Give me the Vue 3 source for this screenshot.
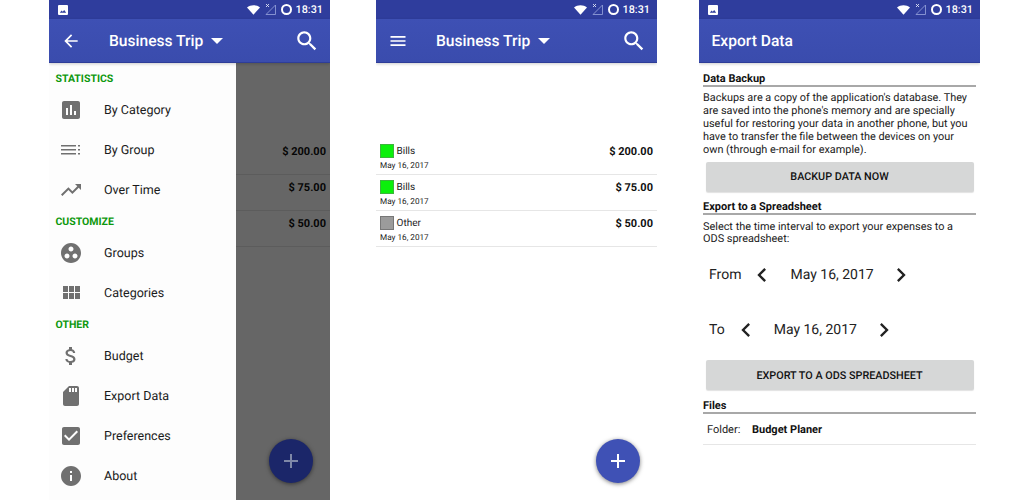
<template>
  <div class="page">
    <!-- drawer open -->
    <div class="phone first">
      <div class="statusbar">
        <svg class="pic" viewBox="0 0 10 10"><path :d="icons.pic" /></svg>
        <svg class="wifi" viewBox="0 0 14 10"><path d="M7 10 0 2.2C2 .8 4.4 0 7 0s5 .8 7 2.2z" /></svg>
        <svg class="signal" viewBox="0 0 11 11"><path d="M10.5 1v9.5H1z" fill="none" stroke="#8f9bd6" stroke-width=".9" /><path d="M1 0l3 3M4 0 1 3" stroke="#dfe3f5" stroke-width=".9" /></svg>
        <span class="ring"></span>
        <span class="time">18:31</span>
      </div>
      <div class="toolbar">
        <svg class="nav" viewBox="0 0 24 24"><path :d="icons.back" /></svg>
        <span class="title">Business Trip</span>
        <span class="caret"></span>
        <svg class="search" viewBox="0 0 24 24"><path :d="icons.search" /></svg>
      </div>
      <!-- the drawer hides the left half of these rows -->
      <div class="expenses">
        <div v-for="row in expenses" :key="row.amount" class="expense right-only">
          <div class="amount">{{ row.amount }}</div>
        </div>
      </div>
      <div class="scrim"></div>
      <div class="drawer">
        <template v-for="item in drawer" :key="item.label">
          <div v-if="item.heading" class="drawer-heading">{{ item.label }}</div>
          <div v-else class="drawer-item">
            <svg class="drawer-icon" viewBox="0 0 24 24"><path :d="item.path" /></svg>
            <span>{{ item.label }}</span>
          </div>
        </template>
      </div>
      <div class="fab dim">
        <svg viewBox="0 0 24 24"><path :d="icons.add" /></svg>
      </div>
    </div>

    <!-- expense list -->
    <div class="phone second">
      <div class="statusbar">
        <svg class="wifi" viewBox="0 0 14 10"><path d="M7 10 0 2.2C2 .8 4.4 0 7 0s5 .8 7 2.2z" /></svg>
        <svg class="signal" viewBox="0 0 11 11"><path d="M10.5 1v9.5H1z" fill="none" stroke="#8f9bd6" stroke-width=".9" /><path d="M1 0l3 3M4 0 1 3" stroke="#dfe3f5" stroke-width=".9" /></svg>
        <span class="ring"></span>
        <span class="time">18:31</span>
      </div>
      <div class="toolbar">
        <svg class="nav" viewBox="0 0 24 24"><path :d="icons.menu" /></svg>
        <span class="title">Business Trip</span>
        <span class="caret"></span>
        <svg class="search" viewBox="0 0 24 24"><path :d="icons.search" /></svg>
      </div>
      <div class="expenses">
        <div v-for="row in expenses" :key="row.amount" class="expense">
          <div>
            <div class="expense-top">
              <span class="swatch" :style="{ background: row.color, borderColor: row.edge }"></span>
              <span class="expense-name">{{ row.name }}</span>
            </div>
            <div class="expense-date">May 16, 2017</div>
          </div>
          <div class="amount">{{ row.amount }}</div>
        </div>
      </div>
      <div class="fab">
        <svg viewBox="0 0 24 24"><path :d="icons.add" /></svg>
      </div>
    </div>

    <!-- export screen -->
    <div class="phone third">
      <div class="statusbar">
        <svg class="pic" viewBox="0 0 10 10"><path :d="icons.pic" /></svg>
        <svg class="wifi" viewBox="0 0 14 10"><path d="M7 10 0 2.2C2 .8 4.4 0 7 0s5 .8 7 2.2z" /></svg>
        <svg class="signal" viewBox="0 0 11 11"><path d="M10.5 1v9.5H1z" fill="none" stroke="#8f9bd6" stroke-width=".9" /><path d="M1 0l3 3M4 0 1 3" stroke="#dfe3f5" stroke-width=".9" /></svg>
        <span class="ring"></span>
        <span class="time">18:31</span>
      </div>
      <div class="toolbar plain">
        <span class="title">Export Data</span>
      </div>
      <div class="export">
        <div class="section-title">Data Backup</div>
        <p>Backups are a copy of the application's database. They are saved into the phone's memory and are specially useful for restoring your data in another phone, but you have to transfer the file between the devices on your own (through e-mail for example).</p>
        <div class="btn">BACKUP DATA NOW</div>
        <div class="section-title second-title">Export to a Spreadsheet</div>
        <p>Select the time interval to export your expenses to a ODS spreadsheet:</p>
        <div v-for="range in ranges" :key="range" class="date-row">
          <span>{{ range }}</span>
          <svg class="chev" viewBox="0 0 24 24"><path :d="icons.left" /></svg>
          <span class="date">May 16, 2017</span>
          <svg class="chev" viewBox="0 0 24 24"><path :d="icons.right" /></svg>
        </div>
        <div class="btn export-btn">EXPORT TO A ODS SPREADSHEET</div>
        <div class="section-title files-title">Files</div>
        <div class="folder">
          <span class="folder-label">Folder:</span>
          <b>Budget Planer</b>
        </div>
      </div>
    </div>
  </div>
</template>

<script setup>
const icons = {
  pic: 'M1 0h8a1 1 0 0 1 1 1v8a1 1 0 0 1-1 1H1a1 1 0 0 1-1-1V1a1 1 0 0 1 1-1zm.8 7.8h6.4L6.2 5 4.7 6.8 3.6 5.6z',
  back: 'M20 11H7.83l5.59-5.59L12 4l-8 8 8 8 1.41-1.41L7.83 13H20v-2z',
  menu: 'M3 18h18v-2H3v2zm0-5h18v-2H3v2zm0-7v2h18V6H3z',
  search: 'M15.5 14h-.79l-.28-.27C15.41 12.59 16 11.11 16 9.5 16 5.91 13.09 3 9.5 3S3 5.91 3 9.5 5.91 16 9.5 16c1.61 0 3.09-.59 4.23-1.57l.27.28v.79l5 4.99L20.49 19l-4.99-5zm-6 0C7.01 14 5 11.99 5 9.5S7.01 5 9.5 5 14 7.01 14 9.5 11.99 14 9.5 14z',
  add: 'M19 13h-6v6h-2v-6H5v-2h6V5h2v6h6v2z',
  left: 'M15.41 7.41L14 6l-6 6 6 6 1.41-1.41L10.83 12z',
  right: 'M8.59 16.59L10 18l6-6-6-6-1.41 1.41L13.17 12z',
}

const expenses = [
  { name: 'Bills', amount: '$ 200.00', color: '#0bf00b', edge: '#3cb53c' },
  { name: 'Bills', amount: '$ 75.00', color: '#0bf00b', edge: '#3cb53c' },
  { name: 'Other', amount: '$ 50.00', color: '#9b9b9b', edge: '#777' },
]

const ranges = ['From', 'To']

const drawer = [
  { label: 'STATISTICS', heading: true },
  { label: 'By Category', path: 'M19 3H5c-1.1 0-2 .9-2 2v14c0 1.1.9 2 2 2h14c1.1 0 2-.9 2-2V5c0-1.1-.9-2-2-2zM9 17H7v-7h2v7zm4 0h-2V7h2v10zm4 0h-2v-4h2v4z' },
  { label: 'By Group', path: 'M2 7h15v1.6H2zm0 4h15v1.6H2zm0 4h15v1.6H2zm17-8h2v1.6h-2zm0 4h2v1.6h-2zm0 4h2v1.6h-2z' },
  { label: 'Over Time', path: 'M16 6l2.29 2.29-4.88 4.88-4-4L2 16.59 3.41 18l6-6 4 4 6.3-6.29L22 12V6z' },
  { label: 'CUSTOMIZE', heading: true },
  { label: 'Groups', path: 'M12 2C6.48 2 2 6.48 2 12s4.48 10 10 10 10-4.48 10-10S17.52 2 12 2zM8 17.5c-1.38 0-2.5-1.12-2.5-2.5s1.12-2.5 2.5-2.5 2.5 1.12 2.5 2.5-1.12 2.5-2.5 2.5zM9.5 8c0-1.38 1.12-2.5 2.5-2.5s2.5 1.12 2.5 2.5-1.12 2.5-2.5 2.5S9.5 9.38 9.5 8zm6.5 9.5c-1.38 0-2.5-1.12-2.5-2.5s1.12-2.5 2.5-2.5 2.5 1.12 2.5 2.5-1.12 2.5-2.5 2.5z' },
  { label: 'Categories', path: 'M4 11h5V5H4v6zm0 7h5v-6H4v6zm6 0h5v-6h-5v6zm6 0h5v-6h-5v6zm-6-7h5V5h-5v6zm6-6v6h5V5h-5z' },
  { label: 'OTHER', heading: true },
  { label: 'Budget', path: 'M11.8 10.9c-2.27-.59-3-1.2-3-2.15 0-1.09 1.01-1.85 2.7-1.85 1.78 0 2.44.85 2.5 2.1h2.21c-.07-1.72-1.12-3.3-3.21-3.81V3h-3v2.16c-1.94.42-3.5 1.68-3.5 3.61 0 2.31 1.91 3.46 4.7 4.13 2.5.6 3 1.48 3 2.41 0 .69-.49 1.79-2.7 1.79-2.06 0-2.87-.92-2.98-2.1h-2.2c.12 2.19 1.76 3.42 3.68 3.83V21h3v-2.15c1.95-.37 3.5-1.5 3.5-3.55 0-2.84-2.43-3.81-4.7-4.4z' },
  { label: 'Export Data', path: 'M18 2h-8L4.02 8 4 20c0 1.1.9 2 2 2h12c1.1 0 2-.9 2-2V4c0-1.1-.9-2-2-2zm-6 6h-2V4h2v4zm3 0h-2V4h2v4zm3 0h-2V4h2v4z' },
  { label: 'Preferences', path: 'M19 3H5c-1.11 0-2 .9-2 2v14c0 1.1.89 2 2 2h14c1.11 0 2-.9 2-2V5c0-1.1-.89-2-2-2zm-9 14l-5-5 1.41-1.41L10 14.17l7.59-7.59L19 8l-9 9z' },
  { label: 'About', path: 'M12 2C6.48 2 2 6.48 2 12s4.48 10 10 10 10-4.48 10-10S17.52 2 12 2zm1 15h-2v-6h2v6zm0-8h-2V7h2v2z' },
]
</script>

<style scoped>
.page {
  display: flex;
  width: 1024px;
  height: 500px;
  overflow: hidden;
  background: #fff;
  font-family: Roboto, "Liberation Sans", sans-serif;
  color: #111;
  text-rendering: geometricPrecision;
}
.phone {
  position: relative;
  flex: none;
  width: 281px;
  height: 500px;
  overflow: hidden;
}
.first {
  margin-left: 49px;
}
.second {
  margin-left: 46px;
}
.third {
  margin-left: 42px;
}

.statusbar {
  position: relative;
  z-index: 3;
  display: flex;
  align-items: center;
  justify-content: flex-end;
  height: 19px;
  padding: 0 7px 0 9px;
  background: #2f3d9d;
}
.pic {
  width: 10px;
  height: 10px;
  margin-right: auto;
  fill: #fff;
}
.wifi {
  width: 13px;
  height: 10px;
  fill: #fff;
}
.signal {
  width: 11px;
  height: 11px;
  margin-left: 5px;
}
.ring {
  width: 11px;
  height: 11px;
  margin-left: 5px;
  border: 2px solid #fff;
  border-radius: 50%;
  box-sizing: border-box;
}
.time {
  margin-left: 4px;
  color: #fff;
  font-size: 10.8px;
  font-weight: 500;
}

.toolbar {
  position: relative;
  z-index: 3;
  display: flex;
  align-items: center;
  height: 42px;
  padding: 1px 10px 0 11.5px;
  background: linear-gradient(#3e50b4, #3a4cad);
  border-bottom: 1px solid #2e3d98;
  box-shadow: 0 1px 3px rgba(0, 0, 0, 0.2);
  color: #fff;
}
.toolbar.plain {
  padding-left: 12.5px;
}
.nav {
  width: 20px;
  height: 20px;
  fill: #fff;
}
.title {
  margin-left: 28.5px;
  font-size: 15.6px;
  font-weight: 500;
}
.plain .title {
  margin-left: 0;
}
.caret {
  margin-left: 8px;
  border-left: 6px solid transparent;
  border-right: 6px solid transparent;
  border-top: 6px solid #fff;
}
.search {
  width: 26px;
  height: 26px;
  margin-left: auto;
  fill: #fff;
}

.expenses {
  padding-top: 76px;
}
.expense {
  display: flex;
  justify-content: space-between;
  height: 36px;
  padding: 4px 4px 0;
  box-sizing: border-box;
  border-bottom: 1px solid #e6e6e6;
}
.right-only {
  justify-content: flex-end;
}
.expense-top {
  display: flex;
  align-items: center;
  height: 16px;
}
.swatch {
  width: 14px;
  height: 14px;
  border: 1px solid;
  box-sizing: border-box;
}
.expense-name {
  margin-left: 2.5px;
  padding-top: 1px;
  font-size: 10px;
  color: #222;
}
.expense-date {
  margin-top: 2px;
  font-size: 8.2px;
  line-height: 11px;
  color: #222;
}
.amount {
  font-size: 11px;
  font-weight: 700;
  line-height: 17px;
}

.scrim {
  position: absolute;
  inset: 0;
  z-index: 1;
  background: rgba(0, 0, 0, 0.6);
}
.drawer {
  position: absolute;
  top: 63px;
  left: 0;
  bottom: 0;
  z-index: 2;
  width: 187px;
  padding-top: 4px;
  box-sizing: border-box;
  background: #fdfdfd;
}
.drawer-heading {
  height: 23px;
  padding-left: 6.5px;
  color: #0d980d;
  font-size: 10.5px;
  font-weight: 700;
  line-height: 23px;
}
.drawer-item {
  display: flex;
  align-items: center;
  height: 40px;
  padding-left: 10px;
  font-size: 12.5px;
  color: #1a1a1a;
}
.drawer-icon {
  width: 24px;
  height: 24px;
  margin-right: 21px;
  fill: #707070;
}

.fab {
  position: absolute;
  right: 17px;
  bottom: 17px;
  z-index: 2;
  display: flex;
  align-items: center;
  justify-content: center;
  width: 44px;
  height: 44px;
  border-radius: 50%;
  background: #3f51b5;
  box-shadow: 0 1px 4px rgba(0, 0, 0, 0.5);
}
.fab svg {
  width: 24px;
  height: 24px;
  fill: #fff;
}
.fab.dim {
  background: #1b2669;
}
.fab.dim svg {
  fill: #7f88a8;
}

.export {
  padding: 7px 4px 0;
}
.section-title {
  height: 15px;
  border-bottom: 2px solid #a8a8a8;
  font-size: 11px;
  font-weight: 700;
  line-height: 17px;
}
.export p {
  margin: 5px 0 0;
  font-size: 10.9px;
  line-height: 12.9px;
  color: #1a1a1a;
}
.btn {
  height: 30px;
  margin: 5px 2.5px 0;
  border-radius: 2px;
  background: #d6d7d7;
  box-shadow: 0 1px 1px rgba(0, 0, 0, 0.12);
  color: #111;
  font-size: 10.8px;
  font-weight: 500;
  line-height: 30px;
  text-align: center;
}
.second-title {
  margin-top: 6.5px;
}
.second-title + p {
  margin-top: 5.5px;
}
.date-row {
  display: flex;
  align-items: center;
  height: 40px;
  margin-top: 9px;
  padding-left: 6px;
  font-size: 14px;
  color: #222;
}
.date-row + .date-row {
  margin-top: 15px;
}
.chev {
  width: 28px;
  height: 28px;
  margin-left: 7px;
  fill: #222;
}
.date {
  margin-left: 14px;
  margin-right: 6px;
}
.export-btn {
  margin-top: 10px;
  line-height: 31px;
}
.files-title {
  margin-top: 6.5px;
}
.folder {
  display: flex;
  align-items: center;
  height: 29px;
  padding: 1px 0 0 4px;
  border-bottom: 1px solid #e6e6e6;
  font-size: 11px;
  color: #222;
}
.folder-label {
  width: 45px;
}
.folder b {
  color: #111;
}
</style>
